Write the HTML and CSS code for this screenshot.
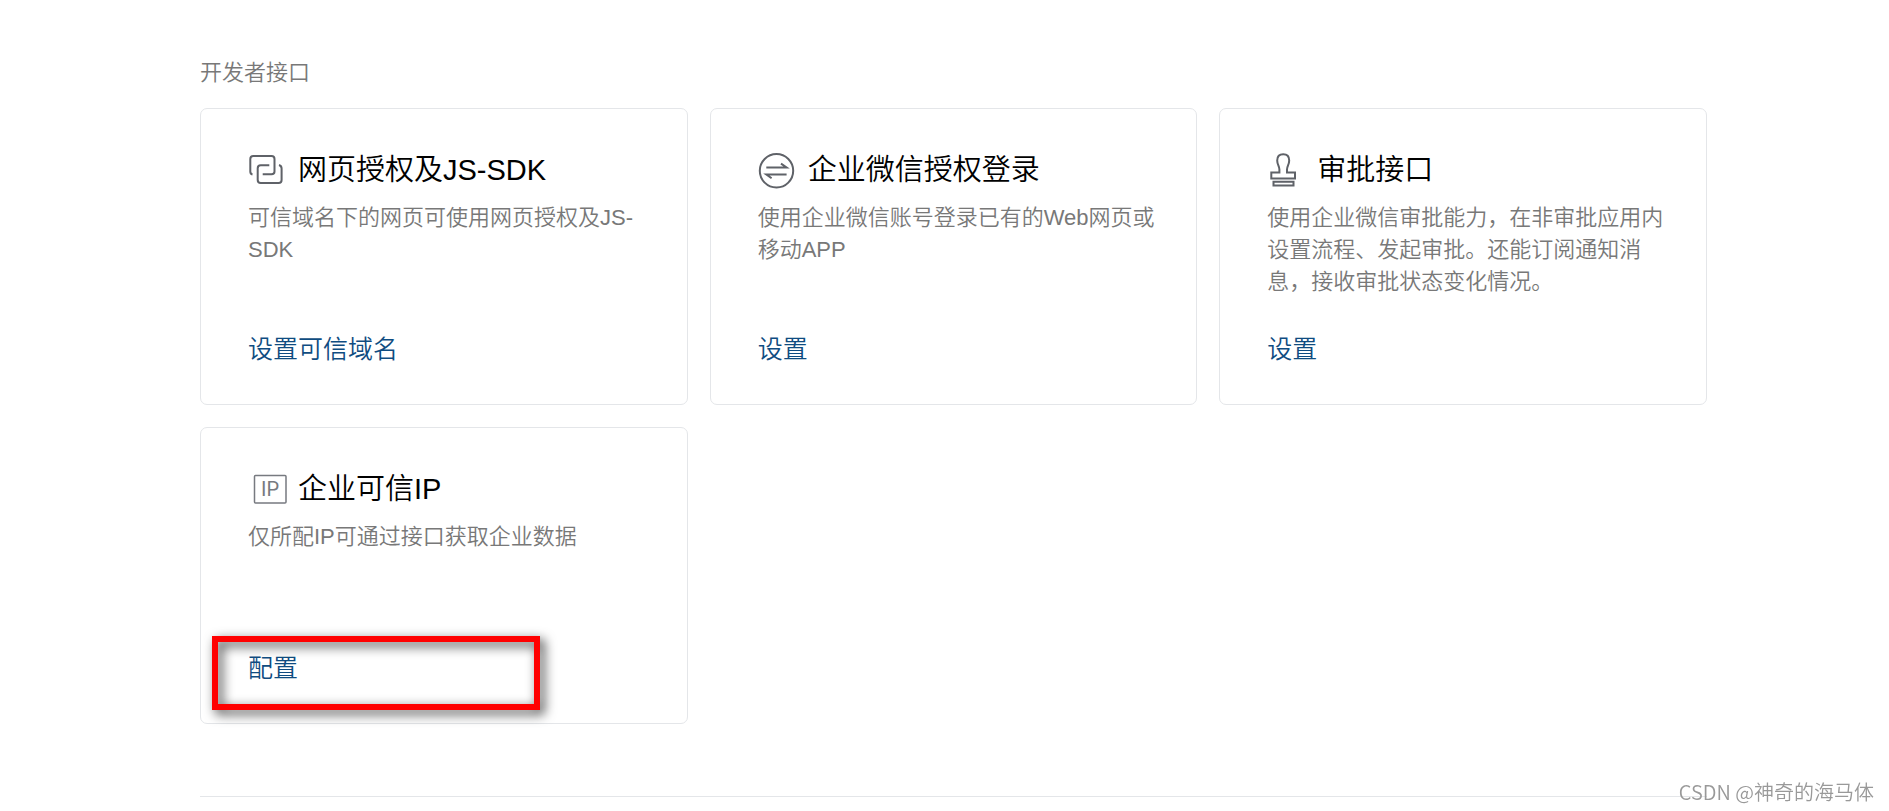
FILE: index.html
```html
<!DOCTYPE html>
<html lang="zh-CN">

<head>
    <meta charset="UTF-8">
    <meta name="viewport" content="width=device-width, initial-scale=1.0">
    <title>开发者接口</title>
    <link rel="stylesheet" href="styles.css">
</head>

<body>
    <main class="container">
        <h3 class="section-title">开发者接口</h3>

        <div class="cards">
            <div class="card">
                <h4 class="card-title">
                    <svg class="icon" viewBox="0 0 40 40" aria-hidden="true">
                        <path d="M4.5 24.5Q2.3 24 2.3 21.5V9Q2.3 6 5.3 6H23.5Q26.5 6 26.5 9V21.5Q26.5 24.3 23.5 24.3H14.7" />
                        <path d="M21.3 15.2H12.7Q9.7 15.2 9.7 18.2V30Q9.7 33 12.7 33H30.6Q33.6 33 33.6 30V18.5Q33.6 15.8 31 15" />
                    </svg>
                    网页授权及JS-SDK
                </h4>
                <p class="desc">可信域名下的网页可使用网页授权及JS-SDK</p>
                <a class="link" href="#">设置可信域名</a>
            </div>

            <div class="card">
                <h4 class="card-title">
                    <svg class="icon" viewBox="0 0 40 40" aria-hidden="true">
                        <circle cx="18.5" cy="20.8" r="16.7" />
                        <path d="M8.3 17.5H28.6L23 13.6M28.6 24.4H8.3L13.6 28.2" />
                    </svg>
                    企业微信授权登录
                </h4>
                <p class="desc">使用企业微信账号登录已有的Web网页或移动APP</p>
                <a class="link" href="#">设置</a>
            </div>

            <div class="card">
                <h4 class="card-title">
                    <svg class="icon" viewBox="0 0 40 40" aria-hidden="true">
                        <path d="M4.3 22.4H12.4V19.5C12.4 16 10.2 14.5 10.2 10.5C10.2 6.5 12.5 4.2 16.2 4.2S22.2 6.5 22.2 10.5C22.2 14.5 20 16 20 19.5V22.4H28V28.4H4.3Z" />
                        <path d="M6.5 31.8H26.5V35.5H6.5Z" />
                    </svg>
                    审批接口
                </h4>
                <p class="desc">使用企业微信审批能力，在非审批应用内设置流程、发起审批。还能订阅通知消息，接收审批状态变化情况。</p>
                <a class="link" href="#">设置</a>
            </div>

            <div class="card">
                <h4 class="card-title">
                    <svg class="icon icon-ip" viewBox="0 0 40 40" aria-hidden="true">
                        <rect x="6.5" y="6.5" width="31.5" height="27.5" rx="1" />
                        <text x="22" y="27" text-anchor="middle">IP</text>
                    </svg>
                    企业可信IP
                </h4>
                <p class="desc">仅所配IP可通过接口获取企业数据</p>
                <a class="link" href="#">配置</a>
                <div class="highlight"></div>
            </div>
        </div>

        <hr class="divider">
    </main>

    <div class="watermark">CSDN @神奇的海马体</div>
</body>

</html>
```
FILE: styles.css
```css
body {
    font-family: "Liberation Sans", "Noto Sans CJK SC", sans-serif;
    font-weight: 350;
    margin: 0;
    background-color: #fff;
}

.container {
    padding: 57px 182px 0 200px;
}

.section-title {
    margin: 0 0 19px;
    font-size: 22px;
    font-weight: 350;
    line-height: 32px;
    color: #787878;
}

.cards {
    display: grid;
    grid-template-columns: repeat(3, 1fr);
    gap: 22px;
}

.card {
    position: relative;
    padding: 41px 36px 39px 47px;
    border: 1px solid #e4e6e9;
    border-radius: 7px;
}

.card-title {
    display: flex;
    align-items: center;
    gap: 10px;
    margin: 0 0 12px;
    font-size: 29px;
    font-weight: 350;
    line-height: 40px;
    color: #000;
}

.icon {
    flex: none;
    width: 40px;
    height: 40px;
    fill: none;
    stroke: #5f6268;
    stroke-width: 2;
}

.icon-ip {
    stroke: #777a80;
    stroke-width: 1.5;
}

.icon-ip text {
    font-family: Roboto, sans-serif;
    font-size: 20px;
    font-weight: 400;
    fill: #777a80;
    stroke: none;
}

.desc {
    min-height: 96px;
    margin: 0 0 35px;
    font-size: 22px;
    line-height: 32px;
    color: #787878;
}

.link {
    display: block;
    font-size: 25px;
    line-height: 32px;
    color: #0f4c81;
    text-decoration: none;
}

/* red marker around the link */
.highlight {
    position: absolute;
    left: 11px;
    top: 208px;
    width: 316px;
    height: 62px;
    border: 6px solid #f00;
    filter: drop-shadow(4px 4px 6px rgba(0, 0, 0, 0.8));
    pointer-events: none;
}

.divider {
    margin: 72px 0 14px;
    border: 0;
    border-top: 1px solid #e4e6e9;
}

.watermark {
    position: fixed;
    right: 15px;
    bottom: 5px;
    font-family: "Noto Sans CJK SC", sans-serif;
    font-size: 20px;
    line-height: 28px;
    color: #999;
}
```
